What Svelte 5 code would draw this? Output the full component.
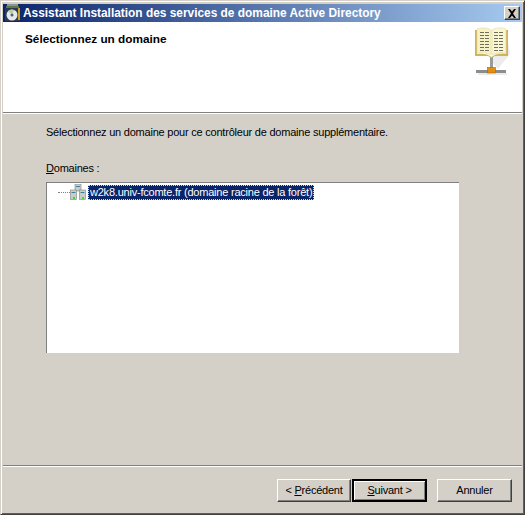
<script>
    let treeLabel = 'w2k8.univ-fcomte.fr (domaine racine de la forêt)'
</script>

<div class="window">
    <div class="titlebar">
        <svg class="appicon" width="16" height="17" viewBox="0 0 16 17">
            <rect x="2" y="0" width="11" height="3" fill="#8a93a0" />
            <rect x="1" y="2" width="13" height="2" fill="#5f7a4a" />
            <rect x="0" y="4" width="15" height="13" fill="#2c3a52" />
            <rect x="13" y="4" width="2" height="12" fill="#c9a227" />
            <circle cx="7" cy="11" r="5.5" fill="#e6e8ec" />
            <path d="M7 11 L3 7 A5.5 5.5 0 0 1 9 6 Z" fill="#b8d0a0" />
            <circle cx="7" cy="11" r="1.5" fill="#50607a" />
        </svg>
        <span class="title">Assistant Installation des services de domaine Active Directory</span>
        <button class="close" aria-label="Fermer">
            <svg width="10" height="9" viewBox="0 0 10 9">
                <path d="M1 0h2l2 2.5L7 0h2L6 4.5 9 9H7L5 6.5 3 9H1l3-4.5z" fill="#000" />
            </svg>
        </button>
    </div>

    <header class="banner">
        <h1>Sélectionnez un domaine</h1>
        <svg class="bookicon" width="36" height="48" viewBox="0 0 36 48">
            <path d="M14 32 L33 15 L35 27 L23 42 Z" fill="#ececec" />
            <path d="M3 47h29" stroke="#e4e4e4" stroke-width="1.5" />
            <path d="M16.5 30v13" stroke="#9a9a9a" stroke-width="3" />
            <rect x="1" y="43" width="30" height="3" fill="#8d8d8d" />
            <rect x="12.5" y="40.5" width="8" height="5.5" fill="#e08f10" stroke="#a86a08" stroke-width="0.6" />
            <path d="M0 3 H2 V27 C8 26 13 27 16.5 30 C20 27 25 26 31 27 V3 H33 V29 H20 L16.5 31 L13 29 H0 Z" fill="#cfb45a" />
            <path d="M2 2 C8 0 13 1 16 3 V28 C13 26 8 25 2 26 Z" fill="#f7f2c4" stroke="#e2d8a0" stroke-width="0.6" />
            <path d="M31 2 C25 0 20 1 17 3 V28 C20 26 25 25 31 26 Z" fill="#f9f6d4" stroke="#e2d8a0" stroke-width="0.6" />
            <path d="M5 5.5h9M5 8.5h9M5 11.5h9M5 14.5h9M5 17.5h9M5 20.5h9M5 23.5h9" stroke="#6f6f60" stroke-width="1" stroke-dasharray="4 1" />
            <path d="M19 5.5h9M19 8.5h9M19 11.5h9M19 14.5h9M19 17.5h9M19 20.5h9M19 23.5h9" stroke="#6f6f60" stroke-width="1" stroke-dasharray="4 1" />
        </svg>
    </header>

    <main class="content">
        <p class="intro">Sélectionnez un domaine pour ce contrôleur de domaine supplémentaire.</p>
        <label class="listlabel" for="tree"><u>D</u>omaines :</label>
        <div class="tree" id="tree">
            <div class="node">
                <span class="dots"></span>
                <svg class="servers" width="16" height="16" viewBox="0 0 16 16">
                    <rect x="5" y="0" width="6" height="7" fill="#c9ccc8" stroke="#7d8480" stroke-width="0.6" />
                    <rect x="0.5" y="6" width="6" height="9.5" fill="#c9ccc8" stroke="#7d8480" stroke-width="0.6" />
                    <rect x="9.5" y="6" width="6" height="9.5" fill="#c9ccc8" stroke="#7d8480" stroke-width="0.6" />
                    <rect x="6" y="2" width="4" height="1" fill="#3e7f9c" />
                    <rect x="1.5" y="8" width="4" height="1" fill="#3e7f9c" />
                    <rect x="10.5" y="8" width="4" height="1" fill="#3e7f9c" />
                    <rect x="3" y="13" width="2" height="2" fill="#30e030" />
                    <rect x="12" y="13" width="2" height="2" fill="#30e030" />
                </svg>
                <span class="selected">{treeLabel}</span>
            </div>
        </div>
    </main>

    <footer class="footer">
        <div class="wizard">
            <button class="btn"><span>&lt; <u>P</u>récédent</span></button>
            <button class="btn default"><span><u>S</u>uivant &gt;</span></button>
        </div>
        <button class="btn"><span>Annuler</span></button>
    </footer>
</div>

<style>
    :global(body) {
        margin: 0;
        background: #d4d0c8;
    }
    .window {
        width: 525px;
        height: 515px;
        box-sizing: border-box;
        display: flex;
        flex-direction: column;
        background: #d4d0c8;
        border: 1px solid;
        border-color: #d4d0c8 #404040 #404040 #d4d0c8;
        box-shadow: inset 1px 1px 0 #fff, inset -1px -1px 0 #606060;
        padding: 3px 2px 2px 2px;
        font: 11px "Liberation Sans", Arial, sans-serif;
        letter-spacing: -0.22px;
        color: #000;
    }
    .titlebar {
        height: 18px;
        flex: none;
        display: flex;
        align-items: center;
        gap: 2px;
        padding: 0 2px 0 2px;
        background: linear-gradient(to right, #0a246a, #a6caf0);
    }
    .appicon {
        flex: none;
        margin-top: -2px;
    }
    .title {
        flex: 1;
        color: #fff;
        font: bold 11.9px "Liberation Sans", sans-serif;
        letter-spacing: 0;
        white-space: nowrap;
        overflow: hidden;
    }
    .close {
        width: 16px;
        height: 14px;
        flex: none;
        padding: 0;
        display: flex;
        align-items: center;
        justify-content: center;
        background: #d4d0c8;
        border: 1px solid;
        border-color: #fff #404040 #404040 #fff;
        box-shadow: inset -1px -1px 0 #808080;
    }
    .banner {
        height: 91px;
        flex: none;
        box-sizing: border-box;
        display: flex;
        justify-content: space-between;
        align-items: flex-start;
        background: #fff;
        padding: 10px 11px 0 22px;
        border-bottom: 1px solid #808080;
        box-shadow: 0 1px 0 #fff;
        margin-bottom: 1px;
    }
    h1 {
        margin: 0;
        font: bold 11.8px "Liberation Sans", Arial, sans-serif;
        letter-spacing: 0;
        line-height: 14px;
    }
    .bookicon {
        margin-top: -5px;
    }
    .content {
        flex: 1;
        display: flex;
        flex-direction: column;
        padding: 0 63px 0 43px;
    }
    .intro {
        margin: 11px 0 0;
        line-height: 14px;
    }
    .listlabel {
        margin-top: 22px;
        line-height: 14px;
    }
    .tree {
        margin-top: 7px;
        width: 413px;
        height: 171px;
        box-sizing: border-box;
        background: #fff;
        border-top: 1px solid #808080;
        border-left: 1px solid #808080;
        padding-top: 1px;
    }
    .node {
        display: flex;
        align-items: center;
        height: 16px;
        padding-left: 11px;
    }
    .dots {
        width: 12px;
        border-top: 1px dotted #808080;
    }
    .servers {
        flex: none;
        margin-right: 2px;
    }
    .selected {
        background: #0a246a;
        color: #fff;
        outline: 1px dotted #f0e060;
        outline-offset: -1px;
        padding: 0 2px;
        line-height: 15px;
        white-space: nowrap;
    }
    .footer {
        height: 47px;
        flex: none;
        box-sizing: border-box;
        display: flex;
        justify-content: flex-end;
        gap: 10px;
        padding: 13px 10px 0 0;
        border-top: 1px solid #808080;
        box-shadow: inset 0 1px 0 #fff;
    }
    .wizard {
        display: flex;
        gap: 1px;
    }
    .btn {
        width: 75px;
        height: 23px;
        box-sizing: border-box;
        padding: 0 0 1px;
        background: #d4d0c8;
        color: #000;
        font: 11px "Liberation Sans", Arial, sans-serif;
        letter-spacing: -0.22px;
        border: 1px solid;
        border-color: #fff #404040 #404040 #fff;
        box-shadow: inset -1px -1px 0 #808080;
    }
    .wizard .btn:first-child {
        width: 74px;
    }
    .default {
        border: 2px solid #000;
        box-shadow: inset 1px 1px 0 #fff, inset -1px -1px 0 #808080;
    }
</style>
